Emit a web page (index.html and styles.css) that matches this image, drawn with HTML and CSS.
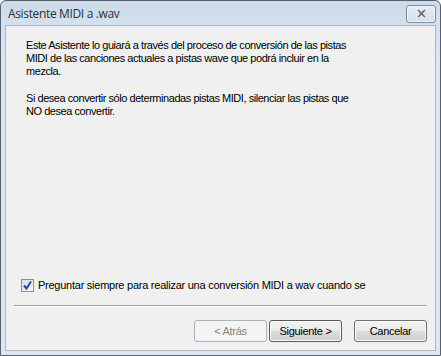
FILE: index.html
```html
<!DOCTYPE html>
<html>
<head>
<meta charset="utf-8">
<link rel="stylesheet" href="styles.css">
</head>
<body>
<div class="window">
  <div class="titlebar">
    <span class="title">Asistente MIDI a .wav</span>
    <div class="close">
      <svg width="15" height="11" viewBox="0 0 15 11">
        <path d="M2 1 L5 1 L7.5 3.5 L10 1 L13 1 L9.5 5.5 L13 10 L10 10 L7.5 7.5 L5 10 L2 10 L5.5 5.5 Z" fill="#9aa0a8" stroke="#ffffff" stroke-width="0.8" stroke-linejoin="round"/>
        <path d="M3.5 2 L5 2 L7.5 4.6 L10 2 L11.5 2 L8.6 5.5 L11.5 9 L10 9 L7.5 6.4 L5 9 L3.5 9 L6.4 5.5 Z" fill="#6a7078"/>
      </svg>
    </div>
  </div>
  <div class="client">
    <div class="content">
      <p class="text">Este Asistente lo guiará a través del proceso de conversión de las pistas<br>MIDI de las canciones actuales a pistas wave que podrá incluir en la<br>mezcla.</p>
      <p class="text">Si desea convertir sólo determinadas pistas MIDI, silenciar las pistas que<br>NO desea convertir.</p>
    </div>
    <label class="check">
      <span class="box">
        <svg width="11" height="11" viewBox="0 0 11 11"><path d="M2 5.5 L4.5 8.5 L9 1.5" fill="none" stroke="#2a44b8" stroke-width="2"/></svg>
      </span>
      <span class="check-label">Preguntar siempre para realizar una conversión MIDI a wav cuando se</span>
    </label>
    <div class="sep"></div>
    <div class="buttons">
      <div class="btn disabled">&lt; Atrás</div>
      <div class="btn default">Siguiente &gt;</div>
      <div class="btn cancel">Cancelar</div>
    </div>
  </div>
</div>
</body>
</html>
```
FILE: styles.css
```css
html, body {
  margin: 0;
  padding: 0;
  background: #ffffff;
}
.window {
  width: 441px;
  height: 356px;
  box-sizing: border-box;
  border: 1px solid #58626e;
  border-radius: 6px 6px 0 0;
  background: linear-gradient(#cddbea, #dce7f3 60px, #dce7f3);
  padding: 0 4px 4px 4px;
  display: flex;
  flex-direction: column;
}
.titlebar {
  height: 24px;
  display: flex;
  align-items: center;
  justify-content: space-between;
}
.title {
  font-family: "Open Sans", "Noto Sans", sans-serif;
  font-size: 12px;
  letter-spacing: -0.35px;
  color: #303030;
  padding-left: 3px;
  padding-top: 1px;
}
.close {
  width: 28px;
  height: 16px;
  border: 1px solid #7c8a9b;
  border-radius: 3px;
  background: linear-gradient(#e6edf5, #d4dfeb);
  box-shadow: inset 0 0 0 1px rgba(255,255,255,0.6);
  display: flex;
  align-items: center;
  justify-content: center;
  margin-right: 0;
  margin-top: 1px;
}
.client {
  flex: 1;
  background: #f0f0f0;
  border: 1px solid #a9b7c6;
  display: flex;
  flex-direction: column;
  font-family: "Liberation Sans", Arial, sans-serif;
  font-size: 11px;
  letter-spacing: -0.45px;
  color: #000;
}
.content {
  flex: 1;
  padding: 13px 20px 0 20px;
}
.text {
  margin: 0 0 14px 0;
  line-height: 13px;
}
.check {
  display: flex;
  align-items: center;
  gap: 4px;
  padding-left: 15px;
  height: 14px;
}
.check-label {
  letter-spacing: -0.25px;
}
.box {
  width: 11px;
  height: 11px;
  border: 1px solid #8e8f8f;
  background: linear-gradient(135deg, #dcdcdc, #f6f6f6);
  display: flex;
  align-items: center;
  justify-content: center;
}
.sep {
  margin: 13px 8px 0 8px;
  height: 1px;
  background: #a0a0a0;
  border-bottom: 1px solid #ffffff;
}
.buttons {
  display: flex;
  padding: 13px 0 8px 188px;
}
.btn {
  width: 71px;
  height: 20px;
  border: 1px solid #707070;
  border-radius: 3px;
  background: linear-gradient(#f2f2f2, #ebebeb 50%, #dddddd 50%, #cfcfcf);
  box-shadow: inset 0 0 0 1px #fcfcfc;
  display: flex;
  align-items: center;
  justify-content: center;
  font-size: 11px;
  letter-spacing: -0.3px;
}
.disabled {
  border-color: #adb2b5;
  background: #f4f4f4;
  color: #838383;
  box-shadow: none;
}
.default {
  margin-left: 2px;
  border-color: #5a5a5a;
}
.cancel {
  margin-left: 12px;
}
```
